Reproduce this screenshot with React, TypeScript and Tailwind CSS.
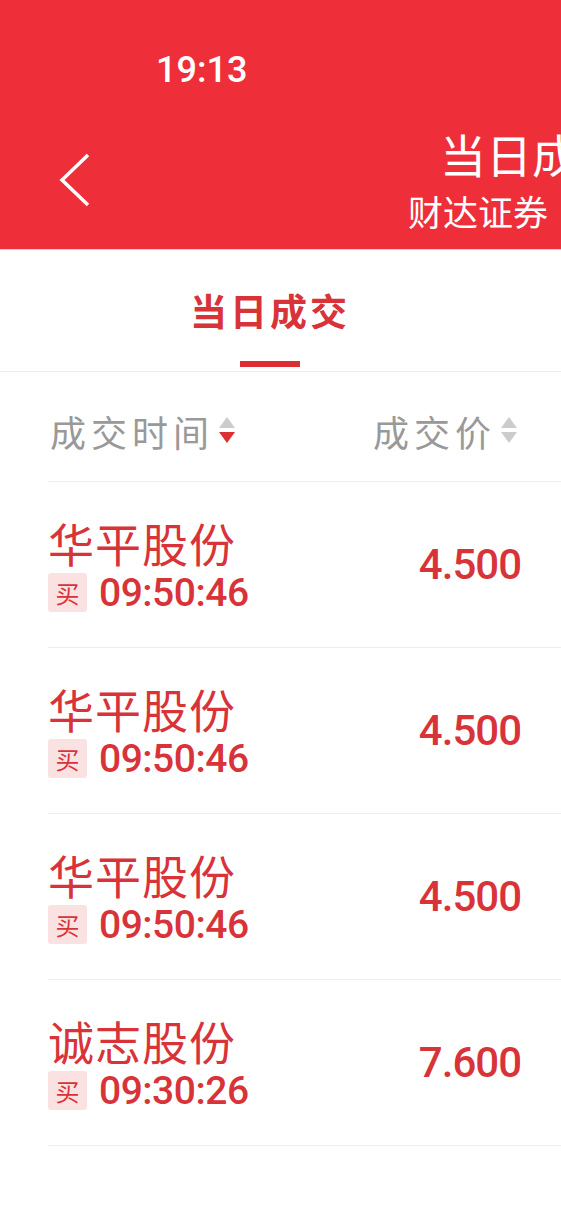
import React from 'react';

const trades = [
  { name: '华平股份', side: '买', time: '09:50:46', price: '4.500' },
  { name: '华平股份', side: '买', time: '09:50:46', price: '4.500' },
  { name: '华平股份', side: '买', time: '09:50:46', price: '4.500' },
  { name: '诚志股份', side: '买', time: '09:30:26', price: '7.600' },
];

const cjk = "font-['Noto_Sans_CJK_SC',sans-serif]";
const num = "font-['Roboto','Noto_Sans_CJK_SC',sans-serif]";

// 排序小箭头，active 表示当前排序方向
const SortArrows = ({ active }: { active?: 'up' | 'down' }) => (
  <svg width="18" height="34" viewBox="0 0 18 34" className="shrink-0">
    <path d="M9 3 L17 14 L1 14 Z" fill={active === 'up' ? '#dd2f33' : '#cccccc'} />
    <path d="M1 18 L17 18 L9 29 Z" fill={active === 'down' ? '#dd2f33' : '#cccccc'} />
  </svg>
);

export default function App() {
  return (
    <div className="w-[561px] h-[1227px] overflow-hidden bg-white">
      <div className="w-[1080px]">
        {/* 顶部红色导航 */}
        <div className="h-[250px] bg-[#ee2f3a] text-white border-b border-[#d9d9d9]">
          <div className={`${num} h-[100px] pt-[50px] pl-[156px] text-[36px] leading-[40px] font-medium`}>19:13</div>
          <div className="flex items-start">
            <div className="w-[120px] pl-[58px] pt-[52px]">
              <svg width="34" height="56" viewBox="0 0 34 56" fill="none">
                <path d="M30 3 L4 28 L30 53" stroke="white" strokeWidth="3.5" />
              </svg>
            </div>
            <div className={`${cjk} flex-1`}>
              <div className="pl-[320px] pt-[26px] text-[46px] leading-[54px]">当日成交</div>
              <div className="pl-[288px] pt-[9px] text-[35px] leading-[44px]">财达证券</div>
            </div>
          </div>
        </div>

        {/* Tab */}
        <div className="h-[122px] border-b border-[#ececec] flex">
          <div className="w-[540px] flex flex-col items-center">
            <div className={`${cjk} pt-[36px] text-[37px] leading-[48px] font-bold tracking-[3px] text-[#d9333a]`}>当日成交</div>
            <div className="mt-[27px] w-[60px] h-[6px] bg-[#dd2f33]" />
          </div>
        </div>

        {/* 表头 */}
        <div className={`${cjk} h-[109px] flex items-center text-[36px] text-[#999999] tracking-[5px]`}>
          <div className="w-[290px] pl-[50px] flex items-center gap-[4px] pt-[8px]">
            <span>成交时间</span>
            <SortArrows active="down" />
          </div>
          <div className="w-[228px] flex items-center justify-end gap-[4px] pt-[8px]">
            <span>成交价</span>
            <SortArrows />
          </div>
        </div>

        {/* 列表 */}
        <div className="ml-[48px] border-t border-[#ededed]">
          {trades.map((t, i) => (
            <div key={i} className="h-[166px] border-b border-[#ededed] flex items-center">
              <div className="w-[242px] flex flex-col pt-[2px]">
                <div className={`${cjk} text-[46px] leading-[46px] text-[#d9333a] tracking-[1px]`}>{t.name}</div>
                <div className="flex items-center gap-[12px] mt-[8px]">
                  <span className={`${cjk} w-[39px] h-[39px] rounded-[3px] bg-[#fbe2e2] text-[#d9333a] text-[24px] leading-[39px] text-center`}>{t.side}</span>
                  <span className={`${num} text-[39px] leading-[40px] font-medium text-[#d9333a] tracking-[-0.5px]`}>{t.time}</span>
                </div>
              </div>
              <div className={`${num} w-[231px] text-right text-[42px] font-medium text-[#d9333a] tracking-[-1px]`}>{t.price}</div>
            </div>
          ))}
        </div>
      </div>
    </div>
  );
}
